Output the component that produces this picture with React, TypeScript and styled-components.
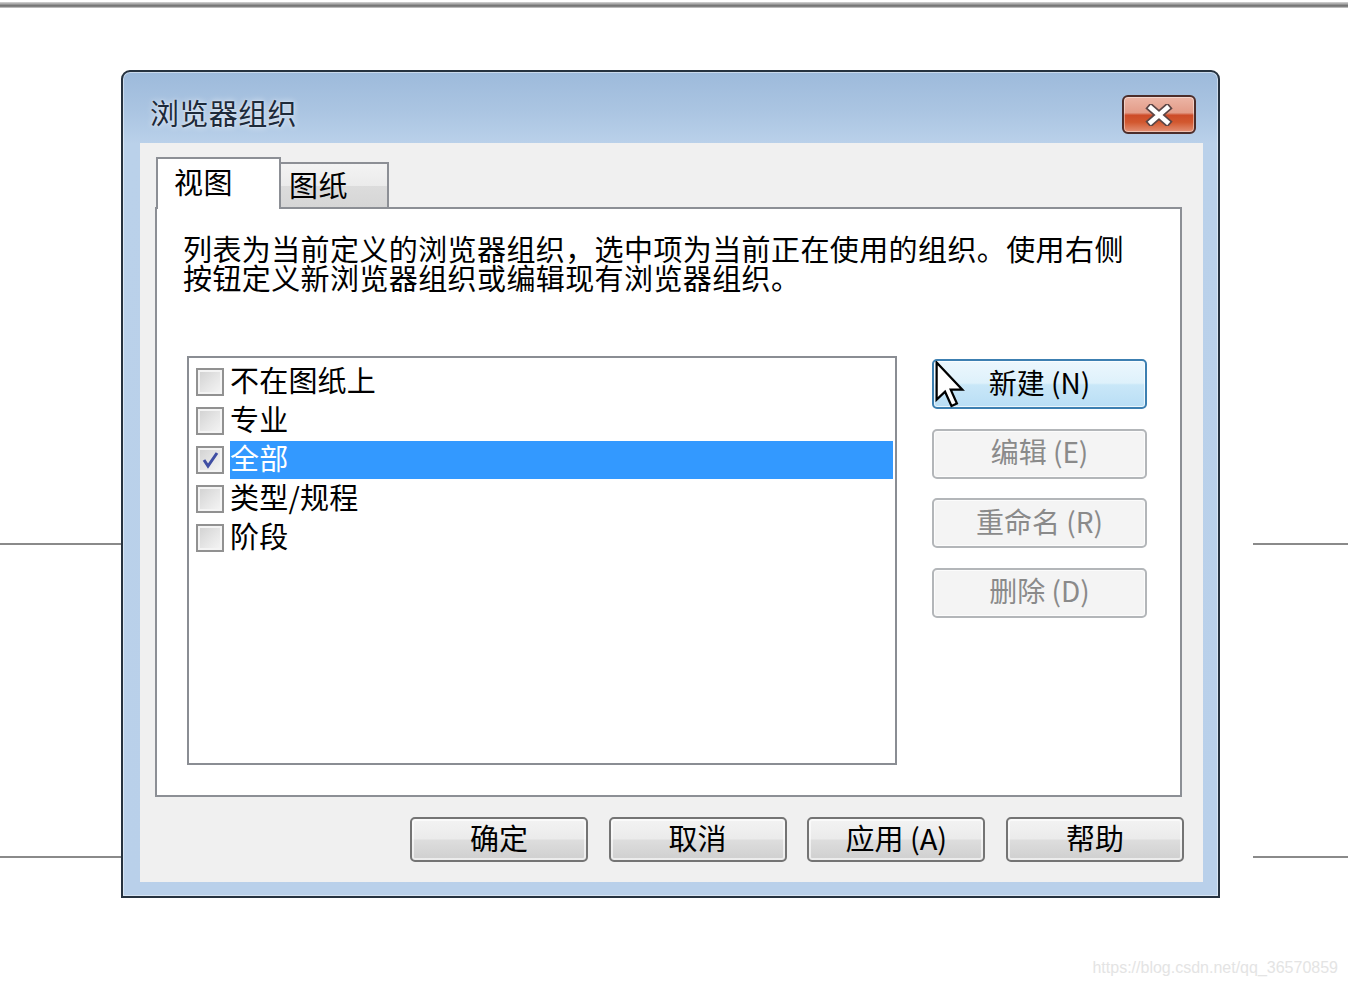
import React from "react";
import styled, { createGlobalStyle } from "styled-components";

const cjk = `"Noto Sans CJK SC", "Noto Sans", sans-serif`;

const GlobalStyle = createGlobalStyle`
  html, body {
    margin: 0;
    padding: 0;
    background: #ffffff;
  }
  body {
    font-family: ${cjk};
  }
`;

const organizations = [
  { label: "不在图纸上", checked: false, selected: false },
  { label: "专业", checked: false, selected: false },
  { label: "全部", checked: true, selected: true },
  { label: "类型/规程", checked: false, selected: false },
  { label: "阶段", checked: false, selected: false },
];

const sideActions = [
  { label: "新建 (N)", hot: true, disabled: false },
  { label: "编辑 (E)", hot: false, disabled: true },
  { label: "重命名 (R)", hot: false, disabled: true },
  { label: "删除 (D)", hot: false, disabled: true },
];

const footerActions = ["确定", "取消", "应用 (A)", "帮助"];

const App = () => {
  return (
    <Page>
      <GlobalStyle />
      <TopRule />
      <Stage>
        <Rail>
          <RailLine $offset={473} />
          <RailLine $offset={311} />
        </Rail>
        <Dialog>
          <TitleBar>
            <TitleText>浏览器组织</TitleText>
            <CloseButton aria-label="关闭">
              <svg width="30" height="22" viewBox="0 0 30 22">
                <path d="M7 4 L23 18 M23 4 L7 18" stroke="#5b4646" strokeWidth="8" strokeLinecap="square" />
                <path d="M7 4 L23 18 M23 4 L7 18" stroke="#ffffff" strokeWidth="4.6" strokeLinecap="square" />
              </svg>
            </CloseButton>
          </TitleBar>
          <Client>
            <TabArea>
              <TabStrip>
                <Tab $active>视图</Tab>
                <Tab>图纸</Tab>
              </TabStrip>
              <Panel>
                <Description>
                  <DescLine>列表为当前定义的浏览器组织，选中项为当前正在使用的组织。使用右侧</DescLine>
                  <DescLine>按钮定义新浏览器组织或编辑现有浏览器组织。</DescLine>
                </Description>
                <ContentRow>
                  <ListBox>
                    {organizations.map((item) => (
                      <ListRow key={item.label}>
                        <CheckBox>
                          {item.checked && (
                            <svg width="24" height="24" viewBox="0 0 24 24">
                              <path d="M6 12 L10 18 L19 5" fill="none" stroke="#3f4ea3" strokeWidth="3" />
                            </svg>
                          )}
                        </CheckBox>
                        <ItemLabel $selected={item.selected}>{item.label}</ItemLabel>
                      </ListRow>
                    ))}
                  </ListBox>
                  <SideButtons>
                    {sideActions.map((action) => (
                      <SideButton key={action.label} $hot={action.hot} $disabled={action.disabled}>
                        {action.hot && (
                          <Cursor width="30" height="47" viewBox="0 0 12 19">
                            <path
                              d="M0.6 0.6 L0.6 15.6 L4 12.4 L6.6 18.2 L8.8 17.2 L6.3 11.6 L11 11.6 Z"
                              fill="#ffffff"
                              stroke="#000000"
                              strokeWidth="0.9"
                              strokeLinejoin="miter"
                            />
                          </Cursor>
                        )}
                        {action.label}
                      </SideButton>
                    ))}
                  </SideButtons>
                </ContentRow>
              </Panel>
            </TabArea>
            <FooterBar>
              {footerActions.map((label) => (
                <PushButton key={label}>{label}</PushButton>
              ))}
            </FooterBar>
          </Client>
        </Dialog>
        <RightRail>
          <RailLine $offset={473} />
          <RailLine $offset={311} />
        </RightRail>
      </Stage>
      <Watermark>https://blog.csdn.net/qq_36570859</Watermark>
    </Page>
  );
};

const Page = styled.div`
  width: 1348px;
  height: 991px;
  overflow: hidden;
  background: #ffffff;
  display: flex;
  flex-direction: column;
`;

const TopRule = styled.div`
  margin-top: 2px;
  height: 6px;
  background: linear-gradient(to bottom, #d6d6d6 0%, #a0a0a0 35%, #6a6a6a 65%, #9a9a9a 85%, #e2e2e2 100%);
`;

const Stage = styled.div`
  margin-top: 62px;
  display: flex;
  align-items: flex-start;
`;

const Rail = styled.div`
  width: 121px;
  display: flex;
  flex-direction: column;
`;

const RightRail = styled(Rail)`
  width: 95px;
  margin-left: 33px;
`;

const RailLine = styled.div<{ $offset: number }>`
  margin-top: ${(p) => p.$offset}px;
  height: 2px;
  background: #8a8a8a;
`;

const Dialog = styled.div`
  width: 1099px;
  height: 828px;
  box-sizing: border-box;
  border: 2px solid #26323f;
  border-radius: 9px 9px 0 0;
  background: linear-gradient(to bottom, #9dbadb 0px, #abc5e2 40px, #bad1ea 72px, #b9d0ea 100%);
  box-shadow: inset 0 0 0 1px rgba(255, 255, 255, 0.45);
  display: flex;
  flex-direction: column;
`;

const TitleBar = styled.div`
  height: 71px;
  box-sizing: border-box;
  padding: 14px 22px 0 27px;
  display: flex;
  align-items: center;
`;

const TitleText = styled.div`
  margin-bottom: 6px;
  font-size: 29px;
  letter-spacing: 0.4px;
  color: #1d2a3a;
  text-shadow: 0 0 6px rgba(255, 255, 255, 0.8), 0 0 2px rgba(255, 255, 255, 0.6);
`;

const CloseButton = styled.div`
  margin-left: auto;
  width: 74px;
  height: 39px;
  box-sizing: border-box;
  border: 2px solid #4c2d2a;
  border-radius: 6px;
  background: linear-gradient(
    to bottom,
    #ecb5a6 0%,
    #e39c88 45%,
    #cd4b28 52%,
    #d2582f 72%,
    #e39176 100%
  );
  box-shadow: inset 0 0 0 1px rgba(255, 255, 255, 0.45);
  display: flex;
  align-items: center;
  justify-content: center;
`;

const Client = styled.div`
  margin: 0 15px 14px 17px;
  height: 739px;
  background: #f0f0f0;
  display: flex;
  flex-direction: column;
`;

const TabArea = styled.div`
  margin: 14px 0 0 15px;
  display: flex;
  flex-direction: column;
`;

const TabStrip = styled.div`
  height: 50px;
  padding-left: 1px;
  display: flex;
  align-items: flex-start;
`;

const Tab = styled.div<{ $active?: boolean }>`
  box-sizing: border-box;
  display: flex;
  align-items: center;
  font-size: 29px;
  letter-spacing: 0.4px;
  color: #000000;
  border: 2px solid #8c8f95;
  position: relative;
  z-index: ${(p) => (p.$active ? 1 : 0)};
  ${(p) =>
    p.$active
      ? `
    width: 125px;
    height: 52px;
    padding: 0 0 7px 16px;
    border-bottom: none;
    background: #ffffff;
  `
      : `
    width: 108px;
    height: 45px;
    margin-top: 5px;
    padding: 0 0 3px 8px;
    border-left: none;
    border-bottom: none;
    background: linear-gradient(to bottom, #f3f3f3 0%, #ebebeb 50%, #dcdcdc 51%, #d6d6d6 100%);
  `}
`;

const Panel = styled.div`
  width: 1027px;
  height: 590px;
  box-sizing: border-box;
  border: 2px solid #8c8f95;
  background: #ffffff;
  padding: 25px 0 0 26px;
  display: flex;
  flex-direction: column;
`;

const Description = styled.div`
  display: flex;
  flex-direction: column;
`;

const DescLine = styled.div`
  height: 29px;
  font-size: 29px;
  line-height: 29px;
  letter-spacing: 0.4px;
  color: #000000;
  white-space: nowrap;
`;

const ContentRow = styled.div`
  margin: 64px 0 0 4px;
  display: flex;
  align-items: flex-start;
  gap: 35px;
`;

const ListBox = styled.div`
  width: 710px;
  height: 409px;
  box-sizing: border-box;
  border: 2px solid #8a8d93;
  padding-top: 4px;
  background: #ffffff;
  display: flex;
  flex-direction: column;
`;

const ListRow = styled.div`
  height: 39px;
  padding-left: 7px;
  display: flex;
  align-items: center;
  gap: 6px;
`;

const CheckBox = styled.span`
  width: 28px;
  height: 28px;
  box-sizing: border-box;
  border: 2px solid #919191;
  background: linear-gradient(135deg, #d0d0d0 0%, #e6e6e6 55%, #f6f6f6 100%);
  box-shadow: inset 0 0 0 2px #f4f4f4;
  display: flex;
  align-items: center;
  justify-content: center;
`;

const ItemLabel = styled.span<{ $selected: boolean }>`
  flex: 1;
  height: 38px;
  box-sizing: border-box;
  padding-bottom: 5px;
  margin-right: 2px;
  display: flex;
  align-items: center;
  font-size: 29px;
  letter-spacing: 0.2px;
  color: ${(p) => (p.$selected ? "#ffffff" : "#000000")};
  background: ${(p) => (p.$selected ? "#3399ff" : "transparent")};
`;

const SideButtons = styled.div`
  margin-top: 3px;
  width: 215px;
  display: flex;
  flex-direction: column;
  gap: 19.5px;
`;

const SideButton = styled.div<{ $hot: boolean; $disabled: boolean }>`
  position: relative;
  height: 50px;
  box-sizing: border-box;
  padding-bottom: 5px;
  border-radius: 5px;
  display: flex;
  align-items: center;
  justify-content: center;
  font-size: 28px;
  color: ${(p) => (p.$disabled ? "#8a8a8a" : "#000000")};
  border: 2px solid ${(p) => (p.$hot ? "#3c7fb1" : "#b3b6b9")};
  background: ${(p) =>
    p.$hot
      ? "linear-gradient(to bottom, #ecf7fd 0%, #def1fb 48%, #c9e7f8 52%, #b9def5 100%)"
      : "#f4f4f4"};
  box-shadow: inset 0 0 0 1px rgba(255, 255, 255, 0.7);
`;

const Cursor = styled.svg`
  position: absolute;
  left: 1px;
  top: 0px;
`;

const FooterBar = styled.div`
  margin-top: 20px;
  padding-right: 19px;
  display: flex;
  justify-content: flex-end;
  gap: 20.7px;
`;

const PushButton = styled.div`
  width: 178px;
  height: 45px;
  box-sizing: border-box;
  padding-bottom: 5px;
  border: 2px solid #747474;
  border-radius: 5px;
  background: linear-gradient(to bottom, #f3f3f3 0%, #ebebeb 48%, #dddddd 52%, #cfcfcf 100%);
  box-shadow: inset 0 0 0 2px rgba(255, 255, 255, 0.6);
  display: flex;
  align-items: center;
  justify-content: center;
  font-size: 29px;
  color: #000000;
`;

const Watermark = styled.div`
  margin-top: 60px;
  padding-right: 10px;
  text-align: right;
  font-family: "Liberation Sans", Arial, sans-serif;
  font-size: 16px;
  line-height: 20px;
  color: #e4e4e4;
`;

export default App;
